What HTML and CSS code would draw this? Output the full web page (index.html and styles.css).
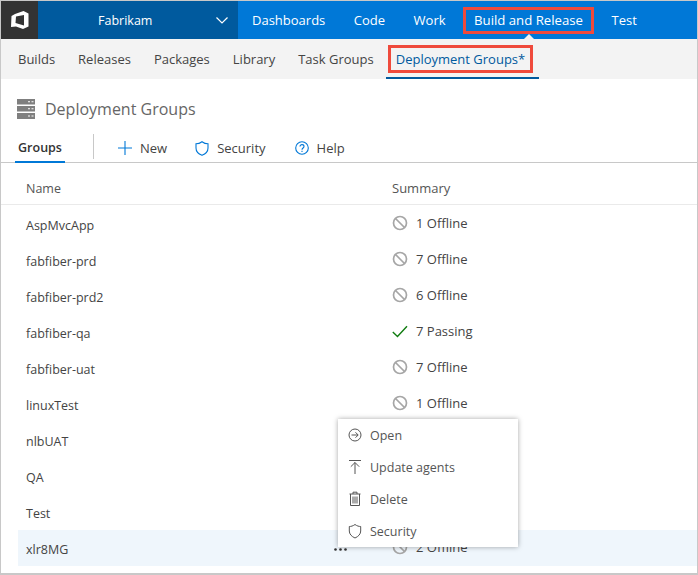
FILE: index.html
```html
<!DOCTYPE html>
<html lang="en">
<head>
<meta charset="utf-8">
<title>Deployment Groups</title>
<link rel="stylesheet" href="styles.css">
</head>
<body>
<div class="frame">
  <header class="topbar">
    <div class="logo">
      <svg width="20" height="20" viewBox="0 0 20 20"><path class="logo-mark" fill-rule="evenodd" d="M13.5 1 L18.5 3.5 V16.500 L13 19 L6 16.500 L1 17 L1.500 6 L5 4 Z M6 6.500 L5.500 13 L14 15.500 V5 Z"/></svg>
    </div>
    <div class="project">
      <span class="project-name">Fabrikam</span>
      <svg class="chevron" width="12" height="7" viewBox="0 0 12 7"><path d="M.5 .5 L6 6 L11.500 .5"/></svg>
    </div>
    <nav class="mainnav">
      <a class="mainlink">Dashboards</a>
      <a class="mainlink">Code</a>
      <a class="mainlink">Work</a>
      <a class="mainlink boxed-main">Build and Release<span class="notch"></span></a>
      <a class="mainlink">Test</a>
    </nav>
  </header>
  <nav class="subnav">
    <a class="sublink">Builds</a>
    <a class="sublink">Releases</a>
    <a class="sublink">Packages</a>
    <a class="sublink">Library</a>
    <a class="sublink">Task Groups</a>
    <a class="sublink current"><span class="boxed-sub">Deployment Groups*</span></a>
  </nav>
  <main class="content">
    <div class="titlebar">
      <svg width="18" height="20" viewBox="0 0 18 20"><path class="server" fill-rule="evenodd" d="M0 0H18V5.500H0Z M0 7H18V12.500H0Z M0 14H18V20H0Z M11 2.200V3.200H13V2.200Z M14.500 2.200V3.200H16.500V2.200Z M11 9.200V10.200H13V9.200Z M14.500 9.200V10.200H16.500V9.200Z M11 16.500V17.500H13V16.500Z M14.500 16.500V17.500H16.500V16.500Z"/></svg>
      <h1 class="title">Deployment Groups</h1>
    </div>
    <div class="toolbar">
      <div class="tab">Groups</div>
      <div class="divider"></div>
      <a class="tool tool-new">
        <svg width="14" height="14" viewBox="0 0 14 14"><path class="blue-line" d="M7 0V14M0 7H14"/></svg>New
      </a>
      <a class="tool tool-security">
        <svg width="14" height="15" viewBox="0 0 14 15"><path class="blue-line" d="M7 .7 C5 2.200 3 2.800 1 2.800 V7 C1 10.500 3.500 13 7 14.300 C10.500 13 13 10.500 13 7 V2.800 C11 2.800 9 2.200 7 .7Z"/></svg>Security
      </a>
      <a class="tool">
        <svg width="14" height="14" viewBox="0 0 14 14"><circle class="blue-line" cx="7" cy="7" r="6.300"/><path class="blue-line" d="M5 5.500C5 3 9 3 9 5.500C9 7 7 7 7 8.800M7 9.800V11"/></svg>Help
      </a>
    </div>
    <div class="table">
      <div class="row head"><div class="name">Name</div><div class="summary">Summary</div></div>
      <div class="row"><div class="name">AspMvcApp</div><div class="summary"><svg class="st" viewBox="0 0 16 16"><use href="#off"/></svg>1 Offline</div></div>
      <div class="row"><div class="name">fabfiber-prd</div><div class="summary"><svg class="st" viewBox="0 0 16 16"><use href="#off"/></svg>7 Offline</div></div>
      <div class="row"><div class="name">fabfiber-prd2</div><div class="summary"><svg class="st" viewBox="0 0 16 16"><use href="#off"/></svg>6 Offline</div></div>
      <div class="row"><div class="name">fabfiber-qa</div><div class="summary"><svg class="st" viewBox="0 0 16 16"><path class="check" d="M.8 9 L5.500 13.500 L15 3.200"/></svg>7 Passing</div></div>
      <div class="row"><div class="name">fabfiber-uat</div><div class="summary"><svg class="st" viewBox="0 0 16 16"><use href="#off"/></svg>7 Offline</div></div>
      <div class="row"><div class="name">linuxTest</div><div class="summary"><svg class="st" viewBox="0 0 16 16"><use href="#off"/></svg>1 Offline</div></div>
      <div class="row"><div class="name">nlbUAT</div></div>
      <div class="row"><div class="name">QA</div></div>
      <div class="row"><div class="name">Test</div></div>
      <div class="row hover"><div class="name">xlr8MG<svg class="dots" width="13" height="3" viewBox="0 0 13 3"><circle cx="1.500" cy="1.500" r="1.300"/><circle cx="6.500" cy="1.500" r="1.300"/><circle cx="11.500" cy="1.500" r="1.300"/></svg></div><div class="summary"><svg class="st" viewBox="0 0 16 16"><use href="#off"/></svg>2 Offline</div></div>
    </div>
    <ul class="menu">
      <li class="item"><svg width="14" height="14" viewBox="0 0 14 14"><circle class="mi" cx="7" cy="7" r="6"/><path class="mi" d="M3.500 7H10M7.500 4.300L10.200 7L7.500 9.700"/></svg>Open</li>
      <li class="item"><svg width="14" height="16" viewBox="0 0 14 16"><path class="mi" d="M1 1.500H13M7 15V3.500M2.800 7.700L7 3.500L11.200 7.700"/></svg>Update agents</li>
      <li class="item"><svg width="14" height="16" viewBox="0 0 14 16"><path class="mi" d="M1.500 3H12.500M5 3V1.200H9V3M2.500 3V14.500H11.500V3M5 5.500V12.500M7 5.500V12.500M9 5.500V12.500"/></svg>Delete</li>
      <li class="item"><svg width="14" height="16" viewBox="0 0 14 16"><path class="mi" d="M7 1.500C5 3 3 3.500 1.300 3.500V8C1.300 11 3.500 13.500 7 15C10.500 13.500 12.700 11 12.700 8V3.500C11 3.500 9 3 7 1.500Z"/></svg>Security</li>
    </ul>
  </main>
</div>
<svg class="defs" width="0" height="0"><defs><g id="off"><circle class="off-line" cx="8" cy="8" r="6.500"/><path class="off-line" d="M3.500 3.500L12.500 12.500"/></g></defs></svg>
</body>
</html>
```
FILE: styles.css
```css
* { box-sizing: border-box; }
html, body { margin: 0; padding: 0; }
body { width: 698px; height: 575px; overflow: hidden; background: #fff; font-family: "Open Sans", "Noto Sans", sans-serif; font-size: 12.500px; color: #333; }
.frame { width: 698px; height: 575px; border: 1px solid #c8c8c8; border-bottom-width: 2px; display: flex; flex-direction: column; }
.defs { position: absolute; }

.topbar { height: 38px; flex: none; display: flex; background: #0078d7; color: #fff; }
.logo { width: 37px; background: #333; display: flex; align-items: center; justify-content: center; }
.logo-mark { fill: #fff; }
.project { width: 200px; background: #005a9e; display: flex; align-items: center; padding-left: 60px; padding-right: 10px; justify-content: space-between; }
.chevron path { fill: none; stroke: #fff; stroke-width: 1.200; }
.mainnav { display: flex; align-items: center; padding-left: 14px; gap: 28.500px; font-size: 13px; }
.mainlink { position: relative; white-space: nowrap; }
.boxed-main { outline: 3px solid #ef4a3c; padding: 2px 8px; margin: 0 -8px; line-height: 17px; font-size: 13.200px; }
.notch { position: absolute; left: 50%; bottom: -8px; margin-left: -5px; border: 5px solid transparent; border-top: 0; border-bottom-color: #f3f3f3; }

.subnav { height: 40px; flex: none; background: #f3f3f3; display: flex; align-items: stretch; padding-left: 17px; gap: 23px; font-size: 13px; color: #444; }
.sublink { display: flex; align-items: center; white-space: nowrap; }
.current { margin-left: -11px; padding: 0 9px 0 5px; border-bottom: 2px solid #005a9e; color: #005a9e; }
.boxed-sub { outline: 3px solid #ef4a3c; padding: 2px 5px; line-height: 18px; position: relative; top: 1px; }

.content { position: relative; flex: 1; min-height: 0; }
.titlebar { display: flex; align-items: center; gap: 10px; padding: 9px 0 0 16px; height: 51px; }
.server { fill: #7f7f7f; }
.title { margin: 0; font-size: 16px; font-weight: 400; color: #666; line-height: 22px; }

.toolbar { height: 33px; display: flex; align-items: center; border-bottom: 1px solid #c8c8c8; padding-left: 14px; }
.tab { height: 32px; width: 50px; text-align: center; line-height: 33px; font-weight: 600; border-bottom: 2px solid #0078d7; margin-bottom: -1px; }
.divider { width: 1px; height: 25px; background: #c8c8c8; margin: 0 24px 0 28px; }
.tool { display: flex; align-items: center; gap: 8px; margin-top: 4px; color: #444; font-size: 13px; }
.tool-new { margin-right: 28px; }
.tool-security { margin-right: 29px; }
.blue-line { fill: none; stroke: #0078d7; stroke-width: 1.100; }

.table { padding-left: 17px; }
.row { height: 36px; display: flex; align-items: center; color: #444; }
.row.head { height: 42px; padding-top: 8px; margin-bottom: 1px; border-bottom: 1px solid #eaeaea; margin-left: -17px; padding-left: 17px; color: #555; }
.name { width: 374px; padding-left: 8px; position: relative; top: 1px; }
.summary { display: flex; align-items: center; gap: 8px; position: relative; top: -1px; font-size: 13px; }
.head .summary { top: 0; }
.st { width: 16px; height: 16px; flex: none; }
.off-line { fill: none; stroke: #a6a6a6; stroke-width: 1.700; }
.check { fill: none; stroke: #107c10; stroke-width: 1.400; }
.hover { background: #eff6fc; }
.dots { position: absolute; left: 316px; top: 7px; fill: #333; }

.menu { position: absolute; left: 337px; top: 340px; width: 180px; margin: 0; padding: 0; list-style: none; background: #fff; box-shadow: 0 0 5px rgba(0,0,0,.35); }
.item { height: 32px; display: flex; align-items: center; gap: 8px; padding-left: 10px; color: #555; }
.mi { fill: none; stroke: #555; stroke-width: 1; }
```
